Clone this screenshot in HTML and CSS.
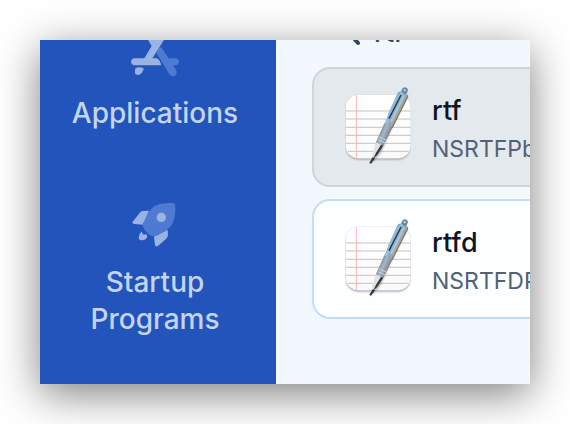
FILE: index.html
```html
<!DOCTYPE html>
<html lang="en">
<head>
<meta charset="utf-8">
<title>Applications</title>
<link rel="stylesheet" href="styles.css">
</head>
<body>
<svg class="defs" aria-hidden="true">
  <defs>
    <linearGradient id="paper" x1="0" y1="0" x2="0" y2="1">
      <stop offset="0" stop-color="#ffffff"/><stop offset="1" stop-color="#fafafa"/>
    </linearGradient>
    <linearGradient id="barrel" gradientUnits="userSpaceOnUse" x1="182" y1="92" x2="214" y2="108">
      <stop offset="0" stop-color="#54799d"/><stop offset=".3" stop-color="#a0c4e0"/><stop offset=".62" stop-color="#7fa3c2"/><stop offset=".8" stop-color="#b9ab93"/><stop offset="1" stop-color="#4d5159"/>
    </linearGradient>
    <linearGradient id="grip" gradientUnits="userSpaceOnUse" x1="143" y1="178" x2="174" y2="192">
      <stop offset="0" stop-color="#758593"/><stop offset=".45" stop-color="#a9b7c3"/><stop offset="1" stop-color="#747e88"/>
    </linearGradient>
    <filter id="soft" x="-20%" y="-20%" width="140%" height="140%"><feGaussianBlur stdDeviation="3"/></filter>
    <symbol id="note" viewBox="45 33 198 246">
      <rect x="48" y="64" width="193" height="190" rx="38" fill="#7d858c" opacity=".6" filter="url(#soft)"/>
      <rect x="47" y="59" width="195" height="194" rx="38" fill="#b9bcbf"/>
      <rect x="47" y="59" width="195" height="191" rx="38" fill="url(#paper)"/>
      <path d="M47 108H242M47 132H242M47 157H242M47 181H242M47 205H242M53 229H236" stroke="#c2c3c5" stroke-width="3"/>
      <path d="M79 60V250" stroke="#ffb5b7" stroke-width="3"/>
      <path d="M238 56L182 165L152 233L125 266L143 214L190 120Z" fill="#59616a" opacity=".5" filter="url(#soft)"/>
      <path d="M202 56Q207 47 217 51L231 57Q236 61 233 68L188 158L163 147Z" fill="url(#barrel)"/>
      <path d="M163 145L188 157L160 213L137 203Z" fill="url(#grip)"/>
      <path d="M148 186L170 196M144 194L166 204" stroke="#cbd5de" stroke-width="3"/>
      <path d="M137 202L160 212L142 240L129 251L127 238Z" fill="#dfe2e5"/>
      <path d="M153 209L160 212L142 240L129 251L139 232Z" fill="#34393e"/>
      <path d="M128 247L135 250L123 266L118 264Z" fill="#2c3135"/>
      <path d="M217 42Q222 36 229 39Q235 43 231 50L228 56L215 50Z" fill="#6c90b3" stroke="#4a6684" stroke-width="2"/>
      <path d="M221 44L227 47" stroke="#c8dff0" stroke-width="4"/>
      <path d="M203 54L174 116L172 134L181 129L212 59Z" fill="#91b9dc"/>
      <path d="M213 60L177 131" stroke="#24313f" stroke-width="4"/>
      <path d="M222 61L183 141" stroke="#a3c8e4" stroke-width="6"/>
      <path d="M229 66L188 149" stroke="#b39a7a" stroke-width="3"/>
    </symbol>
  </defs>
</svg>
<div class="window">
  <nav class="sidebar">
    <a class="nav-item" href="#applications">
      <svg class="nav-icon" viewBox="0 0 150 150" aria-hidden="true">
        <path d="M86 61Q80 67 80 76L118 139Q124 147 133 144Q143 139 139 128L130 112H136Q146 110 147 101Q145 91 136 91H116L95 59Q91 55 86 61Z" fill="#4e7bd1"/>
        <path d="M66 18L77 36L89 18Q98 10 105 17Q109 23 105 31L67 91H80Q91 95 93 112H14Q4 110 3 101Q4 92 14 91H43L65 54L52 32Q48 22 55 16Q61 13 66 18Z" fill="#99b3e3"/>
        <path d="M17 120Q30 115 42 122L35 135Q27 145 17 139Q12 133 17 120Z" fill="#99b3e3"/>
      </svg>
      <span>Applications</span>
    </a>
    <a class="nav-item" href="#startup">
      <svg class="nav-icon" viewBox="30 21 150 150" aria-hidden="true">
        <path d="M87 62L68 63Q61 64 57 71L38 95Q35 101 43 102L70 104Z" fill="#99b3e3"/>
        <path d="M102 140L105 165Q107 172 114 168L138 147Q143 142 144 135L143 119Z" fill="#99b3e3"/>
        <path d="M64 125Q56 132 56 143Q57 151 66 151Q77 150 81 143Q83 136 78 133Q71 135 68 131Q67 127 64 125Z" fill="#99b3e3"/>
        <path d="M161 39Q124 37 104 48Q90 57 81 76L68 101Q66 106 70 112Q78 130 94 137Q101 141 107 138L132 125Q150 115 158 99Q169 78 165 43Q164 40 161 39Z" fill="#4e7bd1"/>
        <circle cx="124" cy="82" r="14" fill="#99b3e3"/>
      </svg>
      <span>Startup<br>Programs</span>
    </a>
  </nav>
  <main class="content">
    <div class="search">
      <svg class="search-icon" viewBox="0 0 26 26" aria-hidden="true">
        <circle cx="10" cy="10" r="9" fill="#a9b9cd"/>
        <circle cx="10" cy="10" r="6" fill="#f3f8ff"/>
        <path d="M16 16L22 23" stroke="#2d4868" stroke-width="4" stroke-linecap="round"/>
      </svg>
      <span>rtf</span>
    </div>
    <ul class="results">
      <li class="card selected">
        <svg class="file-icon" aria-hidden="true"><use href="#note"/></svg>
        <div class="info"><div class="name">rtf</div><div class="type">NSRTFPb</div></div>
      </li>
      <li class="card">
        <svg class="file-icon" aria-hidden="true"><use href="#note"/></svg>
        <div class="info"><div class="name">rtfd</div><div class="type">NSRTFDP</div></div>
      </li>
    </ul>
  </main>
</div>
</body>
</html>
```
FILE: styles.css
```css
* { box-sizing: border-box; }
body {
  margin: 0;
  padding: 40px;
  height: 100vh;
  overflow: hidden;
  background: #fff;
  font-family: Inter, "Liberation Sans", sans-serif;
}
.defs { position: absolute; width: 0; height: 0; }
.window {
  display: flex;
  height: 100%;
  overflow: hidden;
  background: #f3f8ff;
  box-shadow: 0 10px 40px rgba(0, 0, 0, .5);
}
.sidebar {
  flex: none;
  width: 236px;
  padding: 0 6px 46px 0;
  display: flex;
  flex-direction: column;
  justify-content: flex-end;
  gap: 65px;
  background: #2354bb;
}
.nav-item {
  display: flex;
  flex-direction: column;
  align-items: center;
  gap: 17px;
  color: #c3d5ec;
  font-size: 28px;
  line-height: 37px;
  font-weight: 500;
  text-align: center;
  text-decoration: none;
}
.nav-icon { flex: none; width: 50px; height: 50px; }
.content {
  flex: 1;
  min-width: 0;
  overflow: hidden;
  padding: 0 0 65px 36px;
  display: flex;
  flex-direction: column;
  justify-content: flex-end;
}
.search {
  display: flex;
  align-items: center;
  gap: 12px;
  padding-left: 24px;
  margin-bottom: 16px;
  color: #2d4868;
  font-size: 27px;
  font-weight: 500;
  line-height: 36px;
}
.search-icon { width: 26px; height: 26px; }
.results {
  flex: none;
  list-style: none;
  margin: 0;
  padding: 0;
  display: grid;
  gap: 12px;
}
.card {
  display: flex;
  align-items: center;
  gap: 21px;
  width: 200%;
  height: 120px;
  padding: 0 31px;
  border: 2px solid #bfdefc;
  border-radius: 18px;
  background: #fcfeff;
  white-space: nowrap;
}
.selected { background: #e4e9ee; border-color: #cfd5da; }
.file-icon { flex: none; width: 66px; height: 82px; }
.info { padding-top: 6px; }
.name { color: #10151f; font-size: 27px; line-height: 38px; font-weight: 500; }
.type { color: #536173; font-size: 23px; line-height: 38px; }
```
